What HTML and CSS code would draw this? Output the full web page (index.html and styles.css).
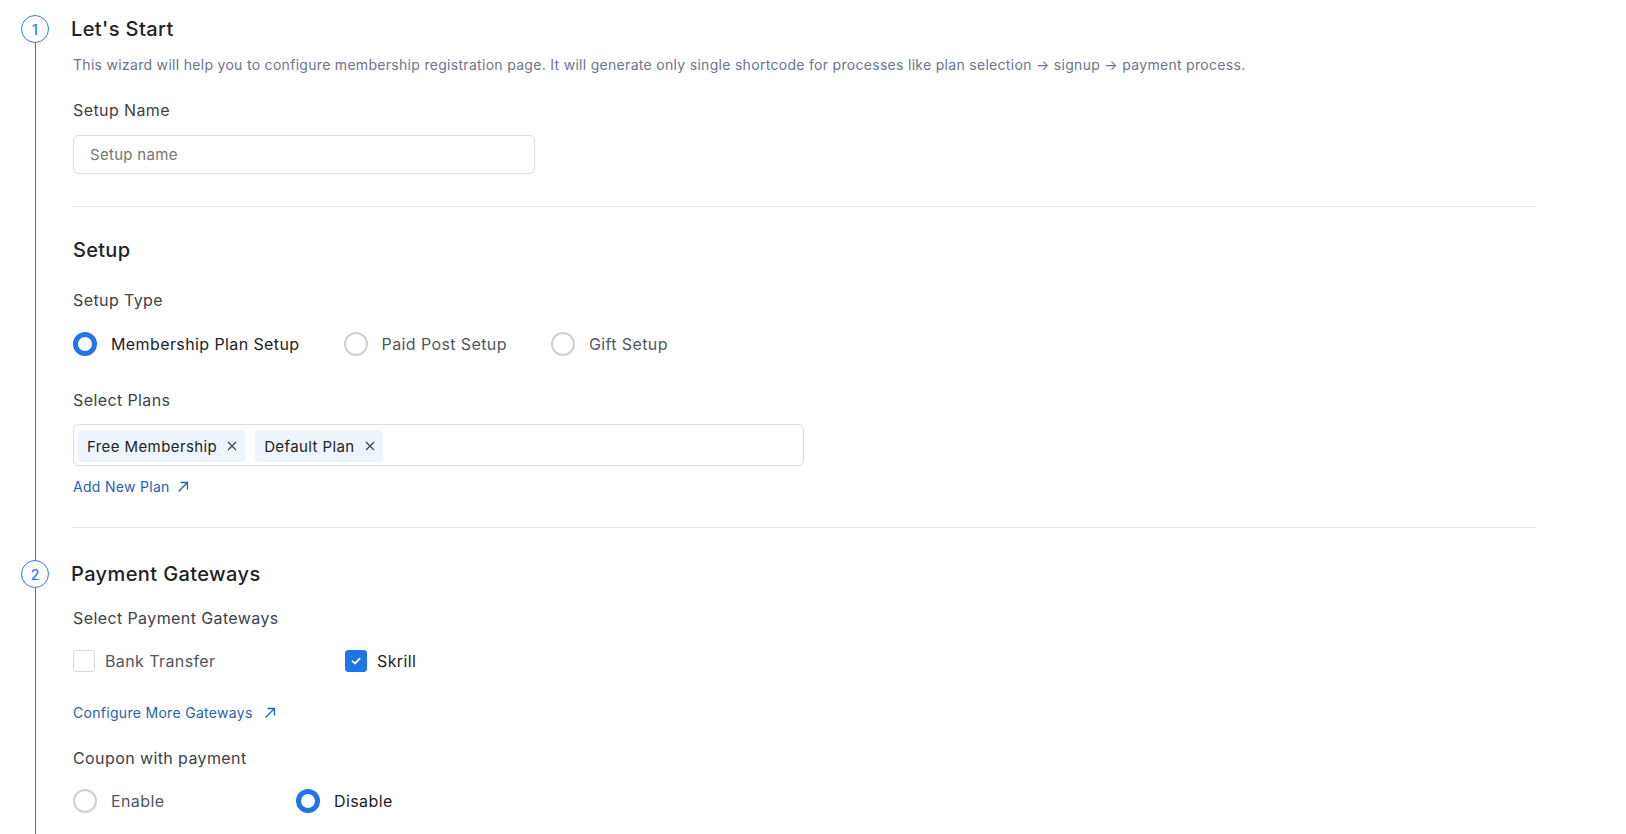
FILE: index.html
```html
<!DOCTYPE html>
<html lang="en">
<head>
<meta charset="UTF-8">
<meta name="viewport" content="width=device-width, initial-scale=1.0">
<title>Membership Setup Wizard</title>
<link rel="stylesheet" href="styles.css">
</head>
<body>
<div class="wizard">
    <div class="step">
        <div class="step-head">
            <span class="step-num">1</span>
            <h2>Let's Start</h2>
        </div>
        <p class="intro">This wizard will help you to configure membership registration page. It will generate only single shortcode for processes like plan selection &rarr; signup &rarr; payment process.</p>

        <label class="field-label label-name" for="setup-name">Setup Name</label>
        <input type="text" id="setup-name" class="text-input" placeholder="Setup name">

        <hr class="divider divider-first">

        <h3 class="section-title">Setup</h3>
        <div class="field-label label-type">Setup Type</div>
        <div class="choices choices-type">
            <label class="choice"><span class="radio checked"></span>Membership Plan Setup</label>
            <label class="choice"><span class="radio"></span><span class="muted">Paid Post Setup</span></label>
            <label class="choice"><span class="radio"></span><span class="muted">Gift Setup</span></label>
        </div>

        <div class="field-label label-plans">Select Plans</div>
        <div class="multi-select">
            <span class="chip">Free Membership
                <svg class="chip-x" width="10" height="10" viewBox="0 0 10 10"><path d="M1 1L9 9M9 1L1 9" stroke="#3c434a" stroke-width="1.2" fill="none"/></svg>
            </span>
            <span class="chip">Default Plan
                <svg class="chip-x" width="10" height="10" viewBox="0 0 10 10"><path d="M1 1L9 9M9 1L1 9" stroke="#3c434a" stroke-width="1.2" fill="none"/></svg>
            </span>
        </div>
        <a href="#" class="ext-link link-plan">Add New Plan
            <svg width="12" height="12" viewBox="0 0 12 12"><path d="M1.5 10.5L10.5 1.5M3.5 1.5H10.5V8.5" stroke="currentColor" stroke-width="1.3" fill="none"/></svg>
        </a>

        <hr class="divider divider-second">
    </div>

    <div class="step">
        <div class="step-head">
            <span class="step-num">2</span>
            <h2>Payment Gateways</h2>
        </div>
        <div class="field-label label-gateways">Select Payment Gateways</div>
        <div class="choices choices-cols">
            <label class="choice"><span class="checkbox"></span>Bank Transfer</label>
            <label class="choice"><span class="checkbox checked">
                <svg width="12" height="12" viewBox="0 0 12 12"><path d="M2.5 6.2L5 8.6L9.6 3.6" stroke="#fff" stroke-width="1.8" fill="none" stroke-linecap="round" stroke-linejoin="round"/></svg>
            </span><span class="dark">Skrill</span></label>
        </div>
        <a href="#" class="ext-link link-gateways">Configure More Gateways
            <svg width="12" height="12" viewBox="0 0 12 12"><path d="M1.5 10.5L10.5 1.5M3.5 1.5H10.5V8.5" stroke="currentColor" stroke-width="1.3" fill="none"/></svg>
        </a>

        <div class="field-label label-coupon">Coupon with payment</div>
        <div class="choices choices-narrow">
            <label class="choice"><span class="radio"></span>Enable</label>
            <label class="choice"><span class="radio checked"></span><span class="dark">Disable</span></label>
        </div>
    </div>
</div>
</body>
</html>
```

FILE: styles.css
```css
body {
    font-family: Inter, "Noto Sans", sans-serif;
    background-color: #fff;
    color: #3c434a;
    margin: 0;
    padding: 0;
    height: 834px;
    overflow: hidden;
}
.wizard {
    margin: 15px 0 0 35px;
    border-left: 1px solid #2a7de1;
    padding-left: 37px;
    width: 1463px;
    height: 819px;
}
.step-head {
    display: flex;
    align-items: center;
    gap: 22px;
    margin-left: -52px;
    height: 28px;
}
.step-num {
    width: 28px;
    height: 28px;
    box-sizing: border-box;
    border: 1.5px solid #2a7de1;
    border-radius: 50%;
    background-color: #fff;
    color: #2a7de1;
    font-size: 14px;
    font-weight: 500;
    display: flex;
    align-items: center;
    justify-content: center;
    position: relative;
    z-index: 1;
}
.step-head h2 {
    margin: 0;
    font-size: 20px;
    font-weight: 500;
    letter-spacing: 0.4px;
    line-height: 28px;
    color: #1d2327;
}
.intro {
    margin: 12px 0 0;
    font-size: 14px;
    letter-spacing: 0.3px;
    line-height: 20px;
    color: #6b7590;
}
.field-label {
    display: block;
    font-size: 16px;
    letter-spacing: 0.4px;
    line-height: 24px;
    color: #3c434a;
}
.label-name { margin-top: 23px; }
.label-type { margin-top: 24px; }
.label-plans { margin-top: 32px; }
.label-gateways { margin-top: 18px; }
.label-coupon { margin-top: 23px; }

.text-input {
    display: block;
    margin-top: 13px;
    width: 462px;
    height: 39px;
    box-sizing: border-box;
    border: 1px solid #dcdcde;
    border-radius: 6px;
    padding: 0 16px;
    font-family: inherit;
    font-size: 15px;
    letter-spacing: 0.3px;
    color: #3c434a;
    outline: none;
}
.text-input::placeholder {
    color: #757575;
}
.divider {
    border: none;
    border-top: 1px solid #e2e4e7;
    margin: 0;
}
.divider-first { margin-top: 32px; }
.divider-second { margin-top: 30px; margin-bottom: 32px; }

.section-title {
    margin: 29px 0 0;
    font-size: 20px;
    font-weight: 500;
    letter-spacing: 0.3px;
    line-height: 28px;
    color: #1d2327;
}
.choices {
    display: flex;
    align-items: center;
}
.choices-type {
    margin-top: 20px;
    gap: 44px;
}
.choices-cols {
    margin-top: 20px;
}
.choices-cols .choice {
    width: 272px;
    gap: 10px;
}
.choices-narrow {
    margin-top: 19px;
}
.choices-narrow .choice {
    width: 223px;
}
.choice {
    display: flex;
    align-items: center;
    gap: 14px;
    font-size: 16px;
    letter-spacing: 0.4px;
    color: #1d2327;
    cursor: pointer;
}
.choice .muted {
    color: #50575e;
}
.choices-narrow .choice,
.choices-cols .choice {
    color: #50575e;
}
.choice .dark {
    color: #1d2327;
}
.radio {
    width: 24px;
    height: 24px;
    box-sizing: border-box;
    border: 2px solid #cfd0d2;
    border-radius: 50%;
    flex-shrink: 0;
}
.radio.checked {
    border: 5px solid #1f74e8;
}
.checkbox {
    width: 22px;
    height: 22px;
    box-sizing: border-box;
    border: 1.5px solid #d5d7db;
    border-radius: 3px;
    flex-shrink: 0;
    display: flex;
    align-items: center;
    justify-content: center;
}
.checkbox.checked {
    background-color: #1f74e8;
    border-color: #1f74e8;
}
.multi-select {
    margin-top: 12px;
    width: 731px;
    height: 42px;
    box-sizing: border-box;
    border: 1px solid #dcdcde;
    border-radius: 6px;
    padding: 5px 4px;
    display: flex;
    gap: 10px;
}
.chip {
    display: flex;
    align-items: center;
    gap: 10px;
    height: 32px;
    padding: 0 8px 0 9px;
    background-color: #eef4fb;
    border-radius: 4px;
    font-size: 15px;
    letter-spacing: 0.4px;
    color: #1d2327;
}
.ext-link {
    display: flex;
    align-items: center;
    gap: 8px;
    width: max-content;
    font-size: 14px;
    letter-spacing: 0.3px;
    line-height: 20px;
    color: #1f63b3;
    text-decoration: none;
}
.link-plan { margin-top: 11px; gap: 7px; }
.link-gateways { margin-top: 31px; gap: 11px; }
```
